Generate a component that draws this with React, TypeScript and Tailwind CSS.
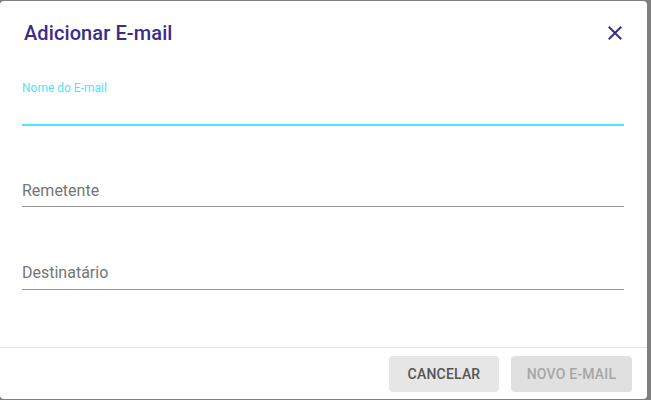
import React from "react";

export default function App() {
  return (
    <div
      className="w-[651px] h-[400px] bg-[#7f7f7f] overflow-hidden pt-px"
      style={{ fontFamily: "Roboto, 'Noto Sans', sans-serif" }}
    >
      <div className="w-[647px] h-[398px] bg-white rounded-[4px] flex flex-col">
        <div className="flex items-center justify-between pt-[16px] pl-[24px] pr-[20px]">
          <h2 className="text-[20px] leading-[32px] font-medium text-[#3d2b8c] tracking-[0.1px]">
            Adicionar E-mail
          </h2>
          <svg width="24" height="24" viewBox="0 0 24 24" className="text-[#3d2b8c]" fill="currentColor">
            <path d="M19 6.41 17.59 5 12 10.59 6.41 5 5 6.41 10.59 12 5 17.59 6.41 19 12 13.41 17.59 19 19 17.59 13.41 12z" />
          </svg>
        </div>

        <div className="ml-[22px] w-[602px] mt-[32px]">
          <div className="text-[12px] leading-[14px] text-[#4fe3fc]">Nome do E-mail</div>
          <div className="h-[31px] border-b-2 border-[#4fe3fc]"></div>
        </div>

        <div className="ml-[22px] w-[602px] mt-[55px] border-b border-[#949494] pb-[6px]">
          <div className="text-[16px] leading-[19px] text-[#757575]">Remetente</div>
        </div>

        <div className="ml-[22px] w-[602px] mt-[56px] border-b border-[#949494] pb-[7px]">
          <div className="text-[16px] leading-[19px] text-[#757575]">Destinatário</div>
        </div>

        <div className="mt-[57px] h-px bg-[#e3e3e3]"></div>

        <div className="flex justify-end gap-[12px] pt-[8px] pr-[15px]">
          <div className="w-[110px] h-[36px] rounded-[4px] bg-[#e6e6e6] flex items-center justify-center text-[14px] font-medium text-[#555555] tracking-[0.2px]">
            CANCELAR
          </div>
          <div className="w-[121px] h-[36px] rounded-[4px] bg-[#e0e0e0] flex items-center justify-center text-[14px] font-medium text-[#a6a6a6] tracking-[0.2px]">
            NOVO E-MAIL
          </div>
        </div>
      </div>
    </div>
  );
}
